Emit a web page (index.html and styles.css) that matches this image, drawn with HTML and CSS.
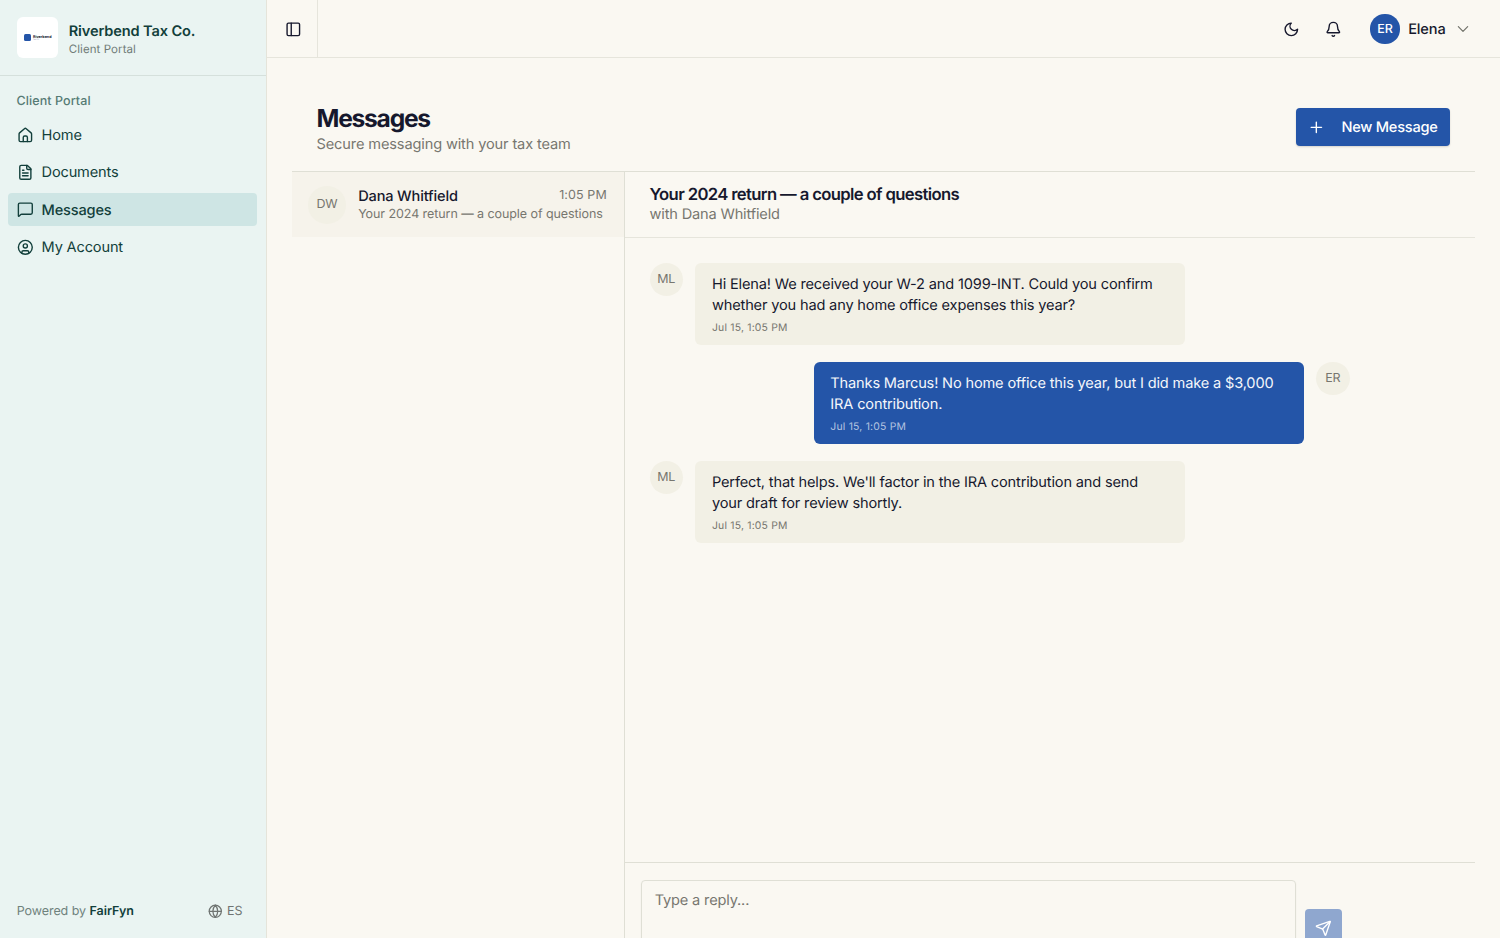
FILE: index.html
```
<!DOCTYPE html>
<html lang="en">

<head>
    <meta charset="UTF-8">
    <meta name="viewport" content="width=device-width, initial-scale=1.0">
    <title>Messages - Riverbend Tax Co.</title>
    <link rel="stylesheet" href="styles.css">
</head>

<body>
    <div class="app">
        <aside class="sidebar">
            <div class="brand">
                <div class="logo">
                    <div class="logo-mark"></div>
                    <div class="logo-text">
                        <b>Riverbend</b>
                        <span>TAX CO.</span>
                    </div>
                </div>
                <div class="brand-text">
                    <div class="brand-name">Riverbend Tax Co.</div>
                    <div class="brand-sub">Client Portal</div>
                </div>
            </div>

            <nav class="nav">
                <div class="nav-title">Client Portal</div>
                <a class="nav-item">
                    <svg class="icon" viewBox="0 0 24 24"><path d="M15 21v-6a2 2 0 0 0-2-2h-2a2 2 0 0 0-2 2v6"/><path d="M3 10a2 2 0 0 1 .709-1.528l7-6a2 2 0 0 1 2.582 0l7 6A2 2 0 0 1 21 10v9a2 2 0 0 1-2 2H5a2 2 0 0 1-2-2z"/></svg>
                    <span>Home</span>
                </a>
                <a class="nav-item">
                    <svg class="icon" viewBox="0 0 24 24"><path d="M15 2H6a2 2 0 0 0-2 2v16a2 2 0 0 0 2 2h12a2 2 0 0 0 2-2V7Z"/><path d="M14 2v4a2 2 0 0 0 2 2h4"/><path d="M10 9H8"/><path d="M16 13H8"/><path d="M16 17H8"/></svg>
                    <span>Documents</span>
                </a>
                <a class="nav-item active">
                    <svg class="icon" viewBox="0 0 24 24"><path d="M22 17a2 2 0 0 1-2 2H6.8a2 2 0 0 0-1.4.6l-2.2 2.2A.7.7 0 0 1 2 21.3V5a2 2 0 0 1 2-2h16a2 2 0 0 1 2 2z"/></svg>
                    <span>Messages</span>
                </a>
                <a class="nav-item">
                    <svg class="icon" viewBox="0 0 24 24"><circle cx="12" cy="12" r="10"/><circle cx="12" cy="10" r="3"/><path d="M7 20.662V19a2 2 0 0 1 2-2h6a2 2 0 0 1 2 2v1.662"/></svg>
                    <span>My Account</span>
                </a>
            </nav>

            <div class="sidebar-footer">
                <div class="powered">Powered by <b>FairFyn</b></div>
                <div class="lang">
                    <svg class="icon" viewBox="0 0 24 24"><circle cx="12" cy="12" r="10"/><path d="M12 2a14.5 14.5 0 0 0 0 20 14.5 14.5 0 0 0 0-20"/><path d="M2 12h20"/></svg>
                    <span>ES</span>
                </div>
            </div>
        </aside>

        <div class="content">
            <header class="topbar">
                <div class="toggle">
                    <svg class="icon" viewBox="0 0 24 24"><rect width="18" height="18" x="3" y="3" rx="2"/><path d="M9 3v18"/></svg>
                </div>
                <div class="top-actions">
                    <svg class="icon moon" viewBox="0 0 24 24"><path d="M12 3a6 6 0 0 0 9 9 9 9 0 1 1-9-9Z"/></svg>
                    <svg class="icon bell" viewBox="0 0 24 24"><path d="M10.268 21a2 2 0 0 0 3.464 0"/><path d="M3.262 15.326A1 1 0 0 0 4 17h16a1 1 0 0 0 .74-1.673C19.41 13.956 18 12.499 18 8A6 6 0 0 0 6 8c0 4.499-1.411 5.956-2.738 7.326"/></svg>
                    <div class="user-avatar">ER</div>
                    <span class="user-name">Elena</span>
                    <svg class="icon chevron" viewBox="0 0 24 24"><path d="m4 8 8 8 8-8"/></svg>
                </div>
            </header>

            <main class="page">
                <div class="page-head">
                    <div class="page-title">
                        <h1>Messages</h1>
                        <p class="subtitle">Secure messaging with your tax team</p>
                    </div>
                    <button class="btn">
                        <svg class="icon" viewBox="0 0 24 24"><path d="M4.5 12h15"/><path d="M12 4.5v15"/></svg>
                        <span>New Message</span>
                    </button>
                </div>

                <div class="panes">
                    <div class="conv-list">
                        <div class="conv">
                            <div class="avatar conv-avatar">DW</div>
                            <div class="conv-body">
                                <div class="conv-row">
                                    <span class="conv-name">Dana Whitfield</span>
                                    <span class="conv-time">1:05 PM</span>
                                </div>
                                <div class="conv-preview">Your 2024 return — a couple of questions</div>
                            </div>
                        </div>
                    </div>

                    <section class="thread">
                        <div class="thread-head">
                            <h2>Your 2024 return — a couple of questions</h2>
                            <p class="with">with Dana Whitfield</p>
                        </div>

                        <div class="messages">
                            <div class="msg">
                                <div class="avatar">ML</div>
                                <div class="bubble">
                                    <p>Hi Elena! We received your W-2 and 1099-INT. Could you confirm whether you had any home office expenses this year?</p>
                                    <div class="time">Jul 15, 1:05 PM</div>
                                </div>
                            </div>
                            <div class="msg mine">
                                <div class="avatar">ER</div>
                                <div class="bubble">
                                    <p>Thanks Marcus! No home office this year, but I did make a $3,000 IRA contribution.</p>
                                    <div class="time">Jul 15, 1:05 PM</div>
                                </div>
                            </div>
                            <div class="msg">
                                <div class="avatar">ML</div>
                                <div class="bubble">
                                    <p>Perfect, that helps. We'll factor in the IRA contribution and send your draft for review shortly.</p>
                                    <div class="time">Jul 15, 1:05 PM</div>
                                </div>
                            </div>
                        </div>

                        <form class="composer">
                            <textarea class="reply" placeholder="Type a reply..."></textarea>
                            <button class="send" type="button" disabled>
                                <svg class="icon" viewBox="0 0 24 24"><path d="M14.536 21.686a.5.5 0 0 0 .937-.024l6.5-19a.496.496 0 0 0-.635-.635l-19 6.5a.5.5 0 0 0-.024.937l7.93 3.18a2 2 0 0 1 1.112 1.11z"/><path d="m21.854 2.147-10.94 10.939"/></svg>
                            </button>
                        </form>
                    </section>
                </div>
            </main>
        </div>
    </div>
</body>

</html>
```
FILE: styles.css
```
* {
    margin: 0;
    padding: 0;
    box-sizing: border-box;
}

body {
    height: 100vh;
    overflow: hidden;
    font-family: Inter, "Liberation Sans", sans-serif;
    font-size: 14.58px;
    letter-spacing: -0.16px;
    text-rendering: geometricPrecision;
    color: #16182d;
    background-color: #faf8f2;
}

.app {
    height: 100vh;
    display: flex;
}

.icon {
    width: 16.67px;
    height: 16.67px;
    flex-shrink: 0;
    fill: none;
    stroke: currentColor;
    stroke-width: 2;
    stroke-linecap: round;
    stroke-linejoin: round;
}

/* sidebar */
.sidebar {
    width: 266.5px;
    flex-shrink: 0;
    display: flex;
    flex-direction: column;
    background-color: #eaf4f2;
    border-right: 1px solid #e5e4da;
    color: #123f3b;
}

.brand {
    height: 76px;
    display: flex;
    align-items: center;
    gap: 10.4px;
    padding: 0 16.67px;
    border-bottom: 1px solid #d5e0dc;
}

.logo {
    width: 41.7px;
    height: 41.7px;
    display: flex;
    align-items: center;
    justify-content: center;
    gap: 2px;
    border-radius: 6px;
    background-color: white;
}

.logo-mark {
    width: 7px;
    height: 7px;
    border-radius: 1.5px;
    background-color: #2455a8;
}

.logo-text {
    display: flex;
    flex-direction: column;
    width: 18px;
    letter-spacing: 0;
    font-size: 3.7px;
    line-height: 4px;
    color: #16182d;
}

.logo-text span {
    font-size: 1.6px;
    line-height: 2px;
    color: #7788a5;
}

.brand-text {
    padding-top: 4px;
}

.brand-name {
    font-weight: 600;
    line-height: 20px;
    letter-spacing: -0.13px;
}

.brand-sub {
    font-size: 11.5px;
    line-height: 17px;
    letter-spacing: 0.08px;
    color: #6f7b77;
}

.nav {
    flex: 1;
    display: flex;
    flex-direction: column;
    gap: 4.2px;
    padding: 9px 8.3px;
}

.nav-title {
    height: 29px;
    padding: 0 8.3px;
    font-size: 12.5px;
    font-weight: 500;
    line-height: 33px;
    letter-spacing: 0.08px;
    color: #567b75;
}

.nav-item {
    height: 33.3px;
    display: flex;
    align-items: center;
    gap: 8.3px;
    padding: 0 8.3px;
    border-radius: 4px;
}

.active {
    background-color: #cee5e4;
    font-weight: 500;
}

.sidebar-footer {
    height: 54px;
    display: flex;
    align-items: center;
    justify-content: space-between;
    padding: 0 23px 0 16.67px;
    font-size: 12.5px;
    letter-spacing: -0.05px;
    color: #6f827d;
}

.powered b {
    font-weight: 600;
    color: #123f3b;
}

.lang {
    display: flex;
    align-items: center;
    gap: 4px;
    color: #6f7472;
}

.lang .icon {
    width: 14.6px;
    height: 14.6px;
}

/* top bar */
.content {
    flex: 1;
    min-width: 0;
    display: flex;
    flex-direction: column;
}

.topbar {
    height: 58px;
    flex-shrink: 0;
    display: flex;
    justify-content: space-between;
    border-bottom: 1px solid #e6e5dc;
}

.toggle {
    width: 51px;
    display: flex;
    align-items: center;
    padding: 1px 0 0 18.5px;
    border-right: 1px solid #e6e5dc;
}

.top-actions {
    display: flex;
    align-items: center;
    padding: 1px 30.5px 0 0;
}

.bell {
    margin: 0 29px 0 25px;
}

.user-avatar {
    width: 29.2px;
    height: 29.2px;
    display: flex;
    align-items: center;
    justify-content: center;
    border-radius: 50%;
    background-color: #2455a8;
    color: white;
    font-size: 12.5px;
    font-weight: 500;
}

.user-name {
    margin: 0 10px 0 8.7px;
    font-weight: 500;
}

.chevron {
    width: 14px;
    height: 14px;
    color: #6f7068;
}

/* page */
.page {
    flex: 1;
    min-height: 0;
    display: flex;
    flex-direction: column;
    padding: 25px 25px 0;
}

.page-head {
    height: 89px;
    display: flex;
    align-items: center;
    justify-content: space-between;
    padding: 0 25px;
    border-bottom: 1px solid #dfdfd5;
}

.page-title {
    padding-top: 2px;
}

h1 {
    font-size: 24.6px;
    font-weight: 700;
    line-height: 32px;
    letter-spacing: -1.25px;
}

.subtitle {
    line-height: 21px;
    letter-spacing: -0.13px;
    color: #77766f;
}

.btn {
    height: 37.5px;
    display: flex;
    align-items: center;
    gap: 16.67px;
    padding: 0 12.5px;
    border: none;
    border-radius: 4px;
    background-color: #2455a8;
    box-shadow: 0 1px 2px rgba(0, 0, 0, 0.15);
    color: white;
    font: inherit;
    font-weight: 500;
    letter-spacing: -0.25px;
    text-rendering: inherit;
}

.panes {
    flex: 1;
    min-height: 0;
    display: flex;
}

.conv-list {
    width: 333px;
    flex-shrink: 0;
    border-right: 1px solid #dfdfd5;
}

.conv {
    height: 64.5px;
    display: flex;
    align-items: center;
    padding: 1px 16.67px 0;
    gap: 12.5px;
    background-color: #f6f3eb;
}

.avatar {
    width: 33.3px;
    height: 33.3px;
    flex-shrink: 0;
    display: flex;
    align-items: center;
    justify-content: center;
    border-radius: 50%;
    background-color: #f2f0e5;
    color: #77766f;
    font-size: 12.5px;
}

.conv-avatar {
    width: 37.5px;
    height: 37.5px;
}

.conv-body {
    flex: 1;
    min-width: 0;
}

.conv-row {
    display: flex;
    justify-content: space-between;
    align-items: center;
    line-height: 20px;
}

.conv-name {
    font-weight: 500;
}

.conv-time,
.conv-preview {
    font-size: 12.5px;
    letter-spacing: -0.07px;
    color: #77766f;
}

.conv-time {
    letter-spacing: 0.1px;
}

.conv-preview {
    line-height: 17px;
    white-space: nowrap;
}

.thread {
    flex: 1;
    min-width: 0;
    display: flex;
    flex-direction: column;
}

.thread-head {
    height: 66px;
    flex-shrink: 0;
    padding: 13px 25px 0;
    border-bottom: 1px solid #e6e5dc;
}

h2 {
    font-size: 16.67px;
    font-weight: 600;
    line-height: 20px;
    letter-spacing: -0.64px;
}

.with {
    line-height: 18px;
    color: #77766f;
}

.messages {
    height: 624px;
    flex-shrink: 0;
    display: flex;
    flex-direction: column;
    gap: 16.67px;
    width: 750px;
    padding: 25px;
}

.msg {
    display: flex;
    gap: 12.5px;
}

.mine {
    flex-direction: row-reverse;
}

.bubble {
    width: 490px;
    padding: 11.2px 16.67px 9.6px;
    border-radius: 6px;
    background-color: #f2f0e5;
    line-height: 20.8px;
}

.time {
    margin-top: 4.2px;
    font-size: 10.4px;
    line-height: 15.6px;
    letter-spacing: 0.2px;
    color: #77766f;
}

.mine .bubble {
    background-color: #2455a8;
    color: #f5f7fb;
}

.mine .time {
    color: #b4c4e0;
}

.composer {
    display: flex;
    align-items: flex-end;
    gap: 8.3px;
    flex-shrink: 0;
    padding: 17px 133px 17px 16.67px;
    border-top: 1px solid #dfdfd5;
}

.reply {
    flex: 1;
    height: 66.7px;
    padding: 9px 12.5px;
    border: 1px solid #dfdfd5;
    border-radius: 4px;
    background-color: transparent;
    box-shadow: 0 1px 2px rgba(0, 0, 0, 0.05);
    font: inherit;
    line-height: 21px;
    letter-spacing: inherit;
    text-rendering: inherit;
    resize: none;
}

.reply::placeholder {
    color: #77766f;
}

.send {
    width: 37.5px;
    height: 37.5px;
    display: flex;
    align-items: center;
    justify-content: center;
    border: none;
    border-radius: 4px;
    background-color: #8fa7cf;
    color: white;
}
```
